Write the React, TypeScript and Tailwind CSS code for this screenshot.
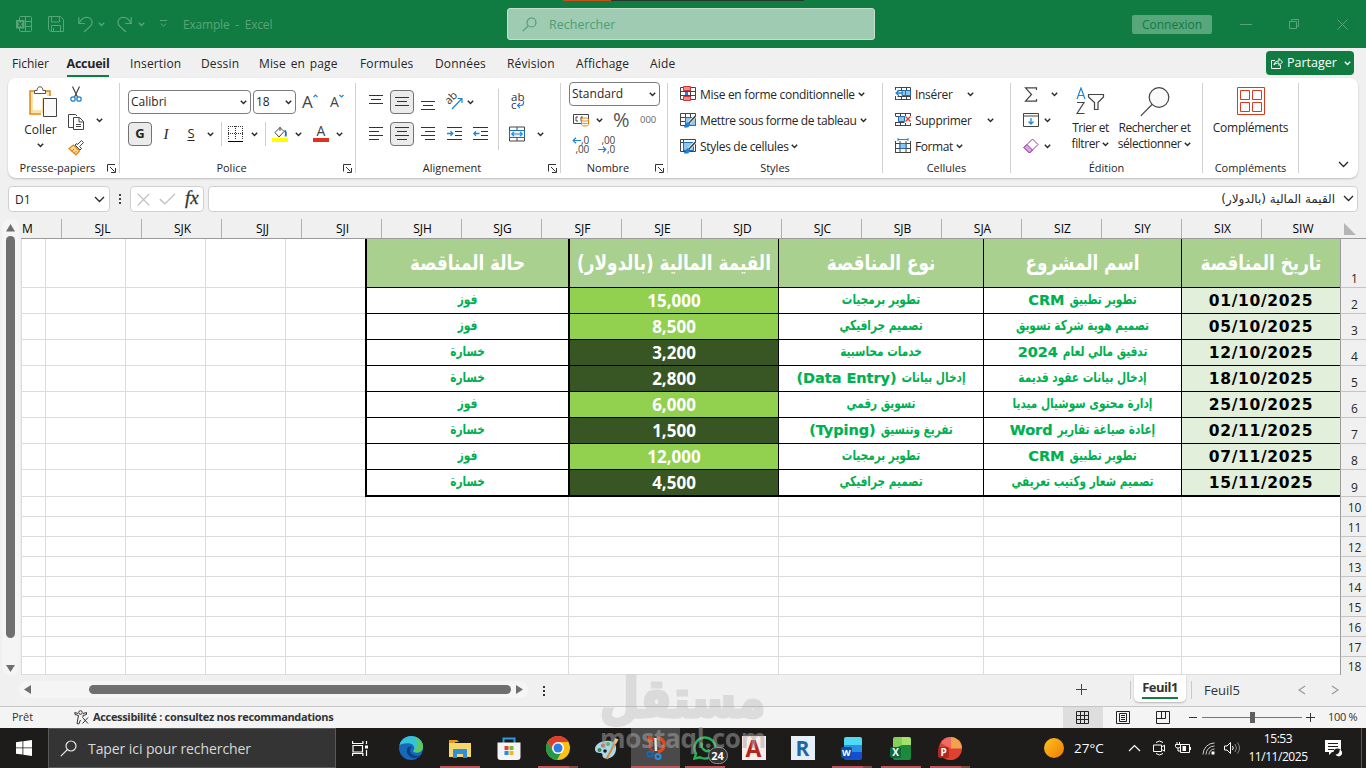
import type { ReactNode } from 'react'
import clsx from 'clsx'

const MENU = ['Insertion', 'Dessin', 'Mise en page', 'Formules', 'Données', 'Révision', 'Affichage', 'Aide']
const MENU_W = ['w-[71px]', 'w-[58px]', 'w-[101px]', 'w-[75px]', 'w-[72px]', 'w-[69px]', 'w-[74px]', 'w-[40px]']
const COLS = ['SJL', 'SJK', 'SJJ', 'SJI', 'SJH', 'SJG', 'SJF', 'SJE', 'SJD', 'SJC', 'SJB', 'SJA', 'SIZ', 'SIY', 'SIX', 'SIW']

type Tender = { date: string; project: string; kind: string; value: string; won: boolean }

const TENDERS: Tender[] = [
  { date: '01/10/2025', project: 'تطوير تطبيق CRM', kind: 'تطوير برمجيات', value: '15,000', won: true },
  { date: '05/10/2025', project: 'تصميم هوية شركة تسويق', kind: 'تصميم جرافيكي', value: '8,500', won: true },
  { date: '12/10/2025', project: 'تدقيق مالي لعام 2024', kind: 'خدمات محاسبية', value: '3,200', won: false },
  { date: '18/10/2025', project: 'إدخال بيانات عقود قديمة', kind: 'إدخال بيانات (Data Entry)', value: '2,800', won: false },
  { date: '25/10/2025', project: 'إدارة محتوى سوشيال ميديا', kind: 'تسويق رقمي', value: '6,000', won: true },
  { date: '02/11/2025', project: 'إعادة صياغة تقارير Word', kind: 'تفريغ وتنسيق (Typing)', value: '1,500', won: false },
  { date: '07/11/2025', project: 'تطوير تطبيق CRM', kind: 'تطوير برمجيات', value: '12,000', won: true },
  { date: '15/11/2025', project: 'تصميم شعار وكتيب تعريفي', kind: 'تصميم جرافيكي', value: '4,500', won: false },
]

function Chev({ className = '' }: { className?: string }) {
  return (
    <svg width="7" height="5" viewBox="0 0 7 5" className={clsx('shrink-0', className)} fill="none" stroke="currentColor" strokeWidth="1.4">
      <path d="M.8 .8 3.5 3.5 6.2 .8" />
    </svg>
  )
}

function BigChev({ className = '' }: { className?: string }) {
  return (
    <svg width="11" height="7" viewBox="0 0 11 7" className={clsx('shrink-0', className)} fill="none" stroke="currentColor" strokeWidth="1.3">
      <path d="M1 1 5.5 5.5 10 1" />
    </svg>
  )
}

function Cell({ w, children }: { w: string; children?: ReactNode }) {
  return <div className={clsx('flex h-full shrink-0 items-center justify-center', w)}>{children}</div>
}

function Launcher() {
  return (
    <svg width="9" height="9" viewBox="0 0 9 9" fill="none" stroke="#333" strokeWidth="1">
      <path d="M.5 7.5V.5H8M3 3l4.5 4.5M8.5 4v4.5H4" />
    </svg>
  )
}

function Group({ w, label, launcher, children }: { w: string; label: string; launcher?: boolean; children: ReactNode }) {
  return (
    <div className={clsx('flex h-full shrink-0', w)}>
      <div className="flex min-w-0 flex-1 flex-col">
        <div className="h-[82px]">{children}</div>
        <div className="flex h-4 items-center">
          <div className="flex-1 text-center text-[11px] leading-4 whitespace-nowrap text-[#262626]">{label}</div>
          {launcher && <div className="w-3"><Launcher /></div>}
        </div>
      </div>
      <div className="mt-[5px] h-[90px] w-px bg-[#d0d0d0]" />
    </div>
  )
}

/* rows of [start, end] for the alignment icons */
function Lines({ rows, y = 0 }: { rows: [number, number][]; y?: number }) {
  return (
    <svg width="14" height="16" viewBox="0 0 14 16" stroke="#333" strokeWidth="1" shapeRendering="crispEdges">
      {rows.map(([a, b], i) => (
        <path key={i} d={`M${a} ${y + i * 4 + 0.5}H${b}`} />
      ))}
    </svg>
  )
}

function Pressed({ children }: { children: ReactNode }) {
  return <div className="flex size-6 shrink-0 items-center justify-center rounded-[4px] border border-[#737373] bg-[#ebebeb]">{children}</div>
}

function Indent({ left }: { left?: boolean }) {
  return (
    <svg width="15" height="14" viewBox="0 0 15 14" fill="none" stroke="#333" shapeRendering="crispEdges">
      <path d="M0 .5H15M8 4.5H15M8 8.5H15M0 12.5H15" />
      <path shapeRendering="auto" stroke="#1e86d6" strokeWidth="1.3" d={left ? 'M6.5 6.5H1M3 4.2 .8 6.5 3 8.8' : 'M0 6.5H5.5M3.5 4.2 5.8 6.5 3.5 8.8'} />
    </svg>
  )
}

function GridIcon({ kind }: { kind: 'cond' | 'table' | 'cell' | 'insert' | 'delete' | 'format' }) {
  return (
    <svg width="16" height="16" viewBox="0 0 16 16" fill="none" stroke="#444" className="shrink-0">
      {kind === 'cond' && (
        <>
          <path d="M.5 1.5h15v12H.5zM.5 5.5h15M.5 9.5h15M5.5 1v13M10.5 1v13" />
          <path d="M3.5.5h7v4h-7zM3.5 10.5h7v4h-7z" fill="#f58b8b" stroke="#d13438" />
          <path d="M5 6h3v3H5z" fill="#1e86d6" stroke="none" />
        </>
      )}
      {kind === 'table' && (
        <>
          <path d="M.5 1.5h15v12H.5zM.5 5.5h15M.5 9.5h15M5.5 1v13M10.5 1v13" fill="#fff" />
          <path d="M5.5 5.5h10v8h-10z" fill="#8ec6ee" stroke="#1e6fb8" />
          <path d="M15.5 4 9 11" stroke="#fff" strokeWidth="3" />
          <path d="M15.5 4 9 11" strokeWidth="1.6" />
          <path d="M8.5 10.5c-3 0-2 3-4.5 4.5 3 .8 6 0 6-3z" fill="#1e86d6" stroke="#1e6fb8" strokeWidth=".6" />
        </>
      )}
      {kind === 'cell' && (
        <>
          <path d="M.5 1.5h15v12H.5z" fill="#fff" />
          <path d="M3.5 1v13M.5 4.5h15" />
          <path d="M3.5 4.5h10v8h-10z" fill="#8ec6ee" stroke="#1e6fb8" />
          <path d="M15.5 4 9 11" stroke="#fff" strokeWidth="3" />
          <path d="M15.5 4 9 11" strokeWidth="1.6" />
          <path d="M8.5 10.5c-3 0-2 3-4.5 4.5 3 .8 6 0 6-3z" fill="#1e86d6" stroke="#1e6fb8" strokeWidth=".6" />
        </>
      )}
      {kind === 'insert' && (
        <>
          <path d="M2.5 1.5h13v12h-13M2.5 4.5h13M2.5 10.5h13M6.5 1v3M11.5 1v3M6.5 10v4M11.5 10v4M.5 1.5h2M.5 13.5h2M.5 10v4M.5 1v3" />
          <path d="M7 4.5h8.5v5H7z" fill="#8ec6ee" stroke="#1e6fb8" />
          <path d="M10.5 5v5" stroke="#1e6fb8" />
          <path d="M8 7H1.5M4 4.2 1.2 7 4 9.8" stroke="#1e86d6" strokeWidth="1.4" />
        </>
      )}
      {kind === 'delete' && (
        <>
          <path d="M.5 1.5h15M.5 4.5h9M.5 10.5h9M.5 13.5h15M.5 1v3M5.5 1v3M10.5 1v3M15.5 1v3M.5 10v4M5.5 10v4M10.5 11v3M15.5 11v3" />
          <path d="M3.5 4.5h6v5h-6z" fill="#8ec6ee" stroke="#1e6fb8" />
          <path d="m10.5 4.5 5 5M15.5 4.5l-5 5" stroke="#e03c31" strokeWidth="1.4" />
        </>
      )}
      {kind === 'format' && (
        <>
          <path d="M.5 3v12M.5 5.5h15M15.5 3v12M.5 10.5h15M.5 14.5h15M5 3v12M11 3v12" />
          <path d="M5 5.5h6v5H5z" fill="#8ec6ee" stroke="#1e6fb8" />
          <path d="M3 1.5h10M3 0v3M13 0v3" stroke="#1e86d6" />
        </>
      )}
    </svg>
  )
}

function TitleBar() {
  return (
    <div className="flex h-12 shrink-0 items-center bg-[#107c41] text-[#57a57b]">
      <div className="flex w-[507px] items-center pl-4">
        <svg width="16" height="16" viewBox="0 0 16 16" fill="none" stroke="currentColor">
          <path d="M3.5 4V1.5q0-1 1-1h10q1 0 1 1v13q0 1-1 1h-10q-1 0-1-1V12M9.5.5v15M9 5.5h6M9 10.5h6" />
          <path d="M0 4h8.5v8.5H0z" fill="currentColor" stroke="none" />
          <path d="m2.5 6 3.5 4.5M6 6l-3.5 4.5" stroke="#107c41" strokeWidth="1.3" />
        </svg>
        <svg width="16" height="16" viewBox="0 0 16 16" fill="none" stroke="currentColor" className="ml-4">
          <path d="M.5.5h12l3 3v12H2.5l-2-2zM3.5 1v5h8V1M3.5 15.5v-6h9v6M5.5 12v3.5" />
        </svg>
        <svg width="15" height="17" viewBox="0 0 15 17" fill="none" stroke="currentColor" strokeWidth="1.2" className="ml-[14px]">
          <path d="M.8 1v6.5h6M1 7.5C3 3 6.5.8 10 1.5c4.5 1 5 6 2.5 8.5L6 16" />
        </svg>
        <Chev className="ml-[5px]" />
        <svg width="15" height="17" viewBox="0 0 15 17" fill="none" stroke="currentColor" strokeWidth="1.2" className="ml-3">
          <path d="M14.2 1v6.5h-6M14 7.5C12 3 8.5.8 5 1.5c-4.5 1-5 6-2.5 8.5L9 16" />
        </svg>
        <Chev className="ml-[6px]" />
        <svg width="7" height="8" viewBox="0 0 7 8" fill="none" stroke="currentColor" className="ml-[15px]">
          <path d="M0 .5h7M.8 3.5l2.7 2.7L6.2 3.5" />
        </svg>
        <span className="ml-4 pt-[2px] text-[12px] tracking-[-0.2px] whitespace-pre">Example  -  Excel</span>
      </div>
      <div className="flex h-8 w-[368px] items-center rounded-[3px] border border-[#c3dfcf] bg-[#9fcbb3] pl-[14px] text-[#4c9f72]">
        <svg width="15" height="15" viewBox="0 0 15 15" fill="none" stroke="currentColor" strokeWidth="1.2">
          <circle cx="9.5" cy="5.5" r="4.5" />
          <path d="M6.2 8.8.8 14.2" />
        </svg>
        <span className="ml-3 pt-[2px] text-[12.5px]">Rechercher</span>
      </div>
      <div className="ml-[257px] flex h-[19px] w-20 items-center justify-center rounded-[2px] bg-[#58a67c] pt-[2px] text-[12px] text-[#107c41]">Connexion</div>
      <div className="ml-7 h-px w-3 bg-current" />
      <svg width="10" height="10" viewBox="0 0 10 10" fill="none" stroke="currentColor" className="ml-[37px]">
        <path d="M.5 2.5h7v7h-7zM2.5 2.5v-2h7v7h-2" />
      </svg>
      <svg width="11" height="11" viewBox="0 0 11 11" stroke="currentColor" className="ml-[38px]">
        <path d="m.5.5 10 10M10.5.5l-10 10" />
      </svg>
    </div>
  )
}

function MenuBar() {
  return (
    <div className="flex h-[30px] shrink-0 items-center text-[12px] text-[#262626]">
      <div className="mt-[2px] w-[55px] pl-3">Fichier</div>
      <div className="mt-[3px] flex w-[66px] justify-center">
        <div className="border-b-2 border-[#107c41] text-center text-[12.5px] leading-[22px] font-bold tracking-[-0.25px]">Accueil</div>
      </div>
      <div className="mt-[2px] ml-[-4px] flex pl-[13px] tracking-[0.15px] [word-spacing:1.5px]">
        {MENU.map((m, i) => (
          <div key={m} className={clsx('whitespace-nowrap', MENU_W[i])}>{m}</div>
        ))}
      </div>
      <div className="flex-1" />
      <div className="mr-3 flex h-6 w-[88px] items-center rounded-[4px] bg-[#107c41] pl-[5px] text-[12.5px] text-white">
        <svg width="12" height="12" viewBox="0 0 12 12" fill="none" stroke="currentColor" className="mr-1">
          <path d="M4 3.5H.5v8h9V8M3 8c.5-3 2-4 5-4V1.5L11.5 5 8 8.5V6C5.5 6 4 6.5 3 8z" />
        </svg>
        <span className="pt-px">Partager</span>
        <Chev className="ml-[7px]" />
      </div>
    </div>
  )
}

function Ribbon() {
  return (
    <div className="mx-2 flex h-[100px] shrink-0 rounded-lg bg-white text-[12px] text-[#262626] shadow-[0_1px_2px_rgba(0,0,0,0.22)]">
      <Group w="w-[112px]" label="Presse-papiers" launcher>
        <div className="flex pt-2">
          <div className="flex w-[60px] flex-col items-center pl-[5px]">
            <svg width="30" height="32" viewBox="0 0 30 32" fill="none" className="ml-[5px]">
              <path d="M2 5h20v5h-7v17H2z" fill="#fbe2a8" />
              <path d="M5 8h14v3h-5v13H5z" fill="#fff" />
              <path d="M6 5H2v23h11M17 5h5v5" stroke="#e8820e" strokeWidth="1.5" />
              <path d="M6.5 7.5v-3H9c0-5 6-5 6 0h2.5v3z" fill="#fff" stroke="#555" />
              <path d="M15.5 12.5h13v18h-13z" fill="#fafafa" stroke="#444" />
            </svg>
            <span className="mt-[3px] leading-[18px]">Coller</span>
            <Chev className="mt-1" />
          </div>
          <div className="flex h-[70px] w-4 flex-col items-center justify-between">
            <svg width="12" height="17" viewBox="0 0 12 17" fill="none" stroke="#444">
              <path d="m2.5.5 5.2 11M9.5.5 4.3 11.5" strokeWidth="1.2" />
              <circle cx="3" cy="13" r="2.2" stroke="#1e86d6" strokeWidth="1.3" />
              <circle cx="9" cy="13" r="2.2" stroke="#1e86d6" strokeWidth="1.3" />
            </svg>
            <svg width="16" height="16" viewBox="0 0 16 16" fill="none" stroke="#444">
              <path d="M5 13.5H.5V.5h7L9 2" />
              <path d="M5.5 3.5h6l4 4v8h-10zM11 3.5v4.5h4.5M8 10.5h5M8 12.5h5" fill="#fff" />
            </svg>
            <svg width="16" height="16" viewBox="0 0 16 16" fill="none">
              <path d="M1 8.5 5.5 5l6 6L8 15z" fill="#fbd9a0" stroke="#e8820e" strokeWidth="1.2" />
              <path d="M3.5 11.5 6 9M6 13.5 8.5 11" stroke="#e8820e" />
              <path d="m7 5 5 5 1.5-1.5-2-2 4-4-2-2-4 4L9 3.5z" fill="#fff" stroke="#444" />
            </svg>
          </div>
          <Chev className="mt-8 ml-3" />
        </div>
      </Group>

      <Group w="w-[236px]" label="Police" launcher>
        <div className="flex h-full flex-col gap-2 pt-3 pl-2">
          <div className="flex h-6 items-center">
            <div className="flex h-6 w-[123px] items-center justify-between rounded-[4px] border border-[#7d7d7d] pr-[3px] pl-[2px]">
              Calibri <Chev />
            </div>
            <div className="ml-[2px] flex h-6 w-[43px] items-center justify-between rounded-[4px] border border-[#7d7d7d] pr-[3px] pl-[2px]">
              18 <Chev />
            </div>
            <div className="ml-[6px] flex w-[17px] text-[17px] leading-6 text-[#444]">
              A
              <svg width="5" height="4" viewBox="0 0 5 4" fill="none" stroke="#1e86d6" strokeWidth="1.2" className="mt-1 shrink-0"><path d="M.5 3 2.5 1l2 2" /></svg>
            </div>
            <div className="ml-[11px] flex w-[15px] text-[14px] leading-6 text-[#444]">
              A
              <svg width="5" height="4" viewBox="0 0 5 4" fill="none" stroke="#1e86d6" strokeWidth="1.2" className="mt-1 shrink-0"><path d="m.5 1 2 2 2-2" /></svg>
            </div>
          </div>
          <div className="flex h-6 items-center">
            <Pressed><span className="text-[13px] font-bold">G</span></Pressed>
            <Cell w="w-7"><span className="font-['Liberation_Serif'] text-[15px] italic">I</span></Cell>
            <Cell w="w-[22px]"><span className="text-[13px] underline underline-offset-2">S</span></Cell>
            <Cell w="w-4"><Chev /></Cell>
            <Cell w="w-[6px]"><div className="h-6 w-px bg-[#d0d0d0]" /></Cell>
            <Cell w="w-[23px]">
              <svg width="15" height="16" viewBox="0 0 15 16" fill="none" stroke="#333" shapeRendering="crispEdges">
                <path d="M0 .5h15M0 7.5h15M.5 0v14M7.5 0v14M14.5 0v14" strokeDasharray="1 1" />
                <path d="M0 15h15" strokeWidth="1" stroke="#000" />
              </svg>
            </Cell>
            <Cell w="w-[15px]"><Chev /></Cell>
            <Cell w="w-[6px]"><div className="h-6 w-px bg-[#d0d0d0]" /></Cell>
            <Cell w="w-[23px]">
              <svg width="16" height="16" viewBox="0 0 16 16" fill="none">
                <path d="M0 12h16v4H0z" fill="#ff0" />
                <path d="m3 6.5 5-5 4 4-5 5.5z" fill="#fff" stroke="#444" />
                <path d="M8 1v4" stroke="#444" />
                <path d="M12.5 4.5c1.5 1 1.8 3 1 6" stroke="#1e6fb8" strokeWidth="1.8" />
              </svg>
            </Cell>
            <Cell w="w-[15px]"><Chev /></Cell>
            <Cell w="w-[30px]">
              <div className="flex h-4 w-4 flex-col items-center border-b-4 border-[#e03020] text-[14px] leading-[10px] text-[#444]">A</div>
            </Cell>
            <Cell w="w-[7px]"><Chev /></Cell>
          </div>
        </div>
      </Group>

      <Group w="w-[205px]" label="Alignement" launcher>
        <div className="flex pt-[11px] pl-[6px]">
          <div className="flex w-[137px] flex-col gap-2 border-r border-[#d0d0d0] pt-px pb-1">
            <div className="flex h-6 items-center">
              <Cell w="w-7"><Lines rows={[[0, 14], [2, 12], [0, 14]]} y={1} /></Cell>
              <Pressed><Lines rows={[[0, 14], [2, 12], [0, 14]]} y={3} /></Pressed>
              <Cell w="w-7"><Lines rows={[[0, 14], [2, 12], [0, 14]]} y={7} /></Cell>
              <Cell w="w-[25px]">
                <svg width="17" height="18" viewBox="0 0 17 18" fill="none" className="overflow-visible">
                  <text x="3" y="12" transform="rotate(-45 3 12)" fontSize="11" fill="#333">ab</text>
                  <path d="M6 16 16 5.5M11.5 5.5H16V10" stroke="#1e86d6" strokeWidth="1.2" />
                </svg>
              </Cell>
              <Cell w="w-[7px]"><Chev /></Cell>
            </div>
            <div className="flex h-6 items-center">
              <Cell w="w-7"><Lines rows={[[0, 14], [0, 10], [0, 14], [0, 10]]} y={1} /></Cell>
              <Pressed><Lines rows={[[0, 14], [2, 12], [0, 14], [2, 12]]} y={1} /></Pressed>
              <Cell w="w-7"><Lines rows={[[0, 14], [4, 14], [0, 14], [4, 14]]} y={1} /></Cell>
              <Cell w="w-6"><Indent /></Cell>
              <Cell w="w-7"><Indent left /></Cell>
            </div>
          </div>
          <div className="flex flex-col gap-2 pt-px pl-[10px]">
            <div className="flex h-6 items-center">
              <svg width="16" height="18" viewBox="0 0 16 18" fill="none" className="overflow-visible">
                <text x="2" y="8" fontSize="11.5" fill="#333">ab</text>
                <text x="2" y="16" fontSize="11.5" fill="#333">c</text>
                <path d="M14.5 8v2q0 2.5-3 2.5H8.5M11 10l-2.5 2.5L11 15" stroke="#1e86d6" strokeWidth="1.2" />
              </svg>
            </div>
            <div className="flex h-6 items-center">
              <svg width="16" height="16" viewBox="0 0 16 16" fill="none" stroke="#444">
                <path d="M.5 1h15v14H.5zM8 1v3M8 12v3" />
                <path d="M.5 4.5h15v7H.5z" fill="#e8f3fc" stroke="#1e6fb8" />
                <path d="M2.5 8h11M5 5.8 2.8 8 5 10.2M11 5.8 13.2 8 11 10.2" stroke="#1e86d6" strokeWidth="1.2" />
              </svg>
              <Chev className="ml-3" />
            </div>
          </div>
        </div>
      </Group>

      <Group w="w-[107px]" label="Nombre" launcher>
        <div className="flex flex-col pt-1 pl-2">
          <div className="flex h-6 w-[91px] items-center justify-between rounded-[4px] border border-[#7d7d7d] pr-[3px] pl-[2px]">
            Standard <Chev />
          </div>
          <div className="mt-[2px] flex h-6 items-center pl-1">
            <svg width="17" height="14" viewBox="0 0 17 14" fill="none" stroke="#444">
              <path d="M.5 1.5h15v9H.5zM5 4H3v4h2M8 8V4h2" />
              <path d="M8.5 6.5c0-2 7-2 7 0v5c0 2-7 2-7 0z" fill="#fff" stroke="#e8820e" />
              <path d="M8.5 7c0 1.5 7 1.5 7 0M8.5 9.5c0 1.5 7 1.5 7 0" stroke="#e8820e" />
            </svg>
            <Chev className="ml-[6px]" />
            <span className="ml-[10px] w-[18px] text-[20px] leading-6 text-[#555]">%</span>
            <span className="ml-[9px] text-[9.5px] text-[#666]">000</span>
          </div>
          <div className="mt-[4px] flex h-5 gap-[9px] pl-[3px] text-[10px] leading-[9px] tracking-[-0.2px] text-[#444]">
            <div className="flex w-[17px] flex-col items-end">
              <div className="flex items-center"><svg width="9" height="7" viewBox="0 0 9 7" fill="none" stroke="#1e86d6" strokeWidth="1.2"><path d="M9 3.5H1M4 .8 1.2 3.5 4 6.2" /></svg>,0</div>
              <div>,00</div>
            </div>
            <div className="flex w-[17px] flex-col items-end">
              <div>,00</div>
              <div className="flex items-center"><svg width="9" height="7" viewBox="0 0 9 7" fill="none" stroke="#1e86d6" strokeWidth="1.2"><path d="M0 3.5h8M5 .8l2.8 2.7L5 6.2" /></svg>,0</div>
            </div>
          </div>
        </div>
      </Group>

      <Group w="w-[215px]" label="Styles">
        <div className="flex flex-col pt-[3px] pl-3 tracking-[-0.3px]">
          <div className="flex h-[26px] items-center gap-1"><GridIcon kind="cond" /><span className="pt-px">Mise en forme conditionnelle</span><Chev className="-ml-px" /></div>
          <div className="flex h-[26px] items-center gap-1"><GridIcon kind="table" /><span className="pt-px tracking-[-0.35px]">Mettre sous forme de tableau</span><Chev className="-ml-px" /></div>
          <div className="flex h-[26px] items-center gap-1"><GridIcon kind="cell" /><span className="pt-px">Styles de cellules</span><Chev className="-ml-[2px]" /></div>
        </div>
      </Group>

      <Group w="w-[128px]" label="Cellules">
        <div className="flex flex-col pt-[3px] pl-3 tracking-[-0.3px]">
          <div className="flex h-[26px] items-center gap-1"><GridIcon kind="insert" /><span className="w-12 pt-px">Insérer</span><Chev /></div>
          <div className="flex h-[26px] items-center gap-1"><GridIcon kind="delete" /><span className="w-[68px] pt-px">Supprimer</span><Chev /></div>
          <div className="flex h-[26px] items-center gap-1"><GridIcon kind="format" /><span className="pt-px tracking-[-0.4px]">Format</span><Chev className="-ml-px" /></div>
        </div>
      </Group>

      <Group w="w-[192px]" label="Édition">
        <div className="flex">
          <div className="flex w-10 shrink-0 flex-col pt-[3px] pl-3">
            <div className="flex h-[26px] items-center">
              <svg width="16" height="15" viewBox="0 0 16 15" fill="none" stroke="#444" strokeWidth="1.2" className="shrink-0"><path d="M13.5 3V.8H2.5L8.5 7.5l-6 6.7h11V12" /></svg>
              <Chev className="ml-3" />
            </div>
            <div className="flex h-[26px] items-center">
              <svg width="16" height="14" viewBox="0 0 16 14" fill="none" stroke="#444" className="shrink-0">
                <path d="M.5.5h15v13H.5zM.5 3h15" />
                <path d="M8 5v6M5.5 8.5 8 11l2.5-2.5" stroke="#1e86d6" strokeWidth="1.3" />
              </svg>
              <Chev className="ml-[5px]" />
            </div>
            <div className="flex h-[26px] items-center">
              <svg width="16" height="16" viewBox="0 0 16 16" fill="none" stroke="#8e3a9d" className="shrink-0">
                <path d="M1 9.5 9.5 1 15 6.5 6.5 15z" fill="#fff" />
                <path d="M1 9.5 4 6.5 9.5 12l-3 3z" fill="#d9a6e0" />
              </svg>
              <Chev className="ml-[5px]" />
            </div>
          </div>
          <div className="flex w-[79px] flex-col items-center pt-[9px] tracking-[-0.45px]">
            <svg width="29" height="29" viewBox="0 0 29 29" fill="none" stroke="#444">
              <path d="m1 12 4-11 4 11M2.5 8.5h5" stroke="#1e86d6" strokeWidth="1.2" />
              <path d="M1 15.5h7L1 26.5h7.5" strokeWidth="1.2" />
              <path d="M12.5 7.5h15v2.5L22 15.5V22.5h-3.5V15.5L12.5 10z" fill="#fafafa" strokeWidth="1.2" />
            </svg>
            <span className="mt-[4px] leading-4">Trier et</span>
            <span className="flex items-center gap-[3px] leading-4">filtrer <Chev /></span>
          </div>
          <div className="flex w-[49px] flex-col items-center pt-[9px] tracking-[-0.45px]">
            <svg width="30" height="30" viewBox="0 0 30 30" fill="none" stroke="#444" strokeWidth="1.2">
              <circle cx="19" cy="10.5" r="9.8" fill="#fafafa" />
              <path d="M12 17.5.8 28.8" />
            </svg>
            <span className="mt-[3px] leading-4 whitespace-nowrap">Rechercher et</span>
            <span className="flex items-center gap-[3px] leading-4">sélectionner <Chev /></span>
          </div>
        </div>
      </Group>

      <Group w="w-[96px]" label="Compléments">
        <div className="flex flex-col items-center pt-[9px]">
          <svg width="28" height="28" viewBox="0 0 28 28" fill="none" stroke="#d83b21">
            <path d="M.5.5h27v27H.5zM3.5 3.5h9v9h-9zM15.5 3.5h9v9h-9zM3.5 15.5h9v9h-9zM15.5 15.5h9v9h-9z" />
          </svg>
          <span className="mt-[5px] leading-4 tracking-[-0.25px]">Compléments</span>
        </div>
      </Group>
      <div className="flex flex-1 items-end justify-end pr-[9px] pb-[10px]"><BigChev /></div>
    </div>
  )
}

function FormulaBar() {
  return (
    <div className="flex h-[41px] shrink-0 px-2 pt-2 text-[12px] text-[#262626]">
      <div className="flex h-[26px] w-[102px] items-center justify-between rounded-[4px] border border-[#d0d0d0] bg-white pr-1 pl-[6px]">
        <span className="pt-px">D1</span> <BigChev />
      </div>
      <div className="flex h-[26px] w-5 flex-col items-center justify-center gap-[2px]">
        {[0, 1, 2].map((i) => <div key={i} className="size-[2px] bg-[#444]" />)}
      </div>
      <div className="flex h-[26px] w-[74px] items-center gap-[9px] rounded-[4px] border border-[#d0d0d0] bg-white pl-[6px]">
        <svg width="13" height="13" viewBox="0 0 13 13" stroke="#bbb" strokeWidth="1.2"><path d="m.8.8 11.5 11.5M12.2.8.8 12.3" /></svg>
        <svg width="17" height="12" viewBox="0 0 17 12" fill="none" stroke="#bbb" strokeWidth="1.2"><path d="m.8 6 5 5L16 .8" /></svg>
        <span className="-mt-[2px] font-['Liberation_Serif'] text-[19px] leading-5 text-[#333] italic [-webkit-text-stroke:0.3px]">fx</span>
      </div>
      <div className="ml-1 flex h-[26px] flex-1 items-center justify-end rounded-[4px] border border-[#d0d0d0] bg-white pr-[3px] pb-px">
        <span dir="rtl" className="mr-2 font-['DejaVu_Sans'] text-[12px] tracking-normal">القيمة المالية (بالدولار)</span>
        <BigChev />
      </div>
    </div>
  )
}

function Caret({ d, className = '' }: { d: string; className?: string }) {
  return <svg width="9" height="9" viewBox="0 0 9 9" fill="#6f6f6f" className={clsx('shrink-0', className)}><path d={d} /></svg>
}

function EmptyCols({ h }: { h: string }) {
  return (
    <>
      <div className={clsx('w-6 shrink-0 border-r border-b border-[#dcdcdc]', h)} />
      {[0, 1, 2].map((i) => <div key={i} className={clsx('w-20 shrink-0 border-r border-b border-[#dcdcdc]', h)} />)}
      <div className={clsx('w-[79px] shrink-0 border-b border-[#dcdcdc]', h)} />
    </>
  )
}

/* latin runs are set wider than the arabic around them */
function Mixed({ text }: { text: string }) {
  const at = text.search(/[(A-Z0-9]/)
  const arabic = at < 0 ? text : text.slice(0, at).trim()
  const latin = at < 0 ? '' : text.slice(at)
  return (
    <div dir="rtl" className="flex items-center gap-[5px]">
      <span className="scale-y-[1.18]">{arabic}</span>
      {latin && <span dir="ltr" className="font-['DejaVu_Sans'] text-[14.5px] leading-5 tracking-[-0.05px] font-stretch-normal [-webkit-text-stroke:0.2px]">{latin}</span>}
    </div>
  )
}

const cell = 'flex shrink-0 items-center justify-center border-black whitespace-nowrap'

function HeadCell({ text, className }: { text: string; className: string }) {
  return (
    <div dir="rtl" className={clsx(cell, 'border-b bg-[#a9d08e]', className)}>
      <span className="scale-y-[1.12]">{text}</span>
    </div>
  )
}

function Sheet() {
  return (
    <div className="flex h-[456px] shrink-0">
      <div className="flex w-[21px] shrink-0 flex-col items-center">
        <div className="flex h-full w-[17px] flex-col items-center rounded-lg bg-[#f5f5f5] pt-[5px] pb-[2px]">
          <Caret d="M4.5 0 9 7.5H0z" />
          <div className="mt-[3px] h-[402px] w-[9px] rounded-full bg-[#6f6f6f]" />
          <div className="flex-1" />
          <Caret d="M0 1h9L4.5 8z" />
        </div>
      </div>
      <div className="flex w-[1319px] shrink-0 flex-col">
        <div className="flex h-5 shrink-0 overflow-hidden border-b border-[#9b9b9b] text-[12px] leading-[19px] text-black">
          <div className="w-[41px] shrink-0 border-r border-[#b0b0b0] pl-[1px]">M</div>
          {COLS.map((c, i) => (
            <div key={c} className={clsx('w-20 shrink-0 pl-[2px] text-center', i < 15 && 'border-r border-[#b0b0b0]')}>{c}</div>
          ))}
        </div>
        <div className="flex-1 overflow-hidden border-b border-l border-[#dcdcdc] bg-white">
          <div className="flex h-[49px] font-['DejaVu_Sans_Condensed','DejaVu_Sans'] text-[18.7px] font-bold text-white font-stretch-semi-condensed">
            <EmptyCols h="h-[49px]" />
            <HeadCell text="حالة المناقصة" className="w-[203px] border-l-2" />
            <HeadCell text="القيمة المالية (بالدولار)" className="w-[211px] border-r border-l-2" />
            <HeadCell text="نوع المناقصة" className="w-[205px] border-r" />
            <HeadCell text="اسم المشروع" className="w-[198px] border-r" />
            <HeadCell text="تاريخ المناقصة" className="w-[158px]" />
          </div>
          {TENDERS.map((t, i) => {
            const last = i === TENDERS.length - 1
            const h = last ? 'h-[27px]' : 'h-[26px]'
            const row = clsx(cell, h, last ? 'border-b-2' : 'border-b')
            return (
              <div key={t.date} className="flex font-['DejaVu_Sans_Condensed','DejaVu_Sans'] text-[11.7px] font-bold text-[#00b050] font-stretch-semi-condensed">
                <EmptyCols h={h} />
                <div className={clsx(row, 'w-[203px] border-l-2 pb-[2px]')}><Mixed text={t.won ? 'فوز' : 'خسارة'} /></div>
                <div className={clsx(row, "w-[211px] border-r border-l-2 font-['Open_Sans'] text-[17px] text-white font-stretch-normal", t.won ? 'bg-[#92d050]' : 'bg-[#375623]')}>{t.value}</div>
                <div className={clsx(row, 'w-[205px] border-r pb-[2px]')}><Mixed text={t.kind} /></div>
                <div className={clsx(row, 'w-[198px] border-r pb-[2px]')}><Mixed text={t.project} /></div>
                <div className={clsx(row, "w-[158px] bg-[#e2efda] pt-[2px] font-['DejaVu_Sans'] text-[15.5px] tracking-[0.7px] text-black font-stretch-normal")}>{t.date}</div>
              </div>
            )
          })}
          {[10, 11, 12, 13, 14, 15, 16, 17, 18].map((n) => (
            <div key={n} className="flex h-5">
              <EmptyCols h="h-5" />
              <div className="w-[203px] shrink-0 border-b border-l border-[#dcdcdc]" />
              <div className="w-[211px] shrink-0 border-r border-b border-l border-[#dcdcdc]" />
              <div className="w-[205px] shrink-0 border-r border-b border-[#dcdcdc]" />
              <div className="w-[198px] shrink-0 border-r border-b border-[#dcdcdc]" />
              <div className="w-[158px] shrink-0 border-b border-[#dcdcdc]" />
            </div>
          ))}
        </div>
      </div>
      <div className="flex w-[26px] shrink-0 flex-col overflow-hidden text-[12px]">
        <div className="flex h-5 shrink-0 items-end border-b border-[#9b9b9b] pb-[3px] pl-1">
          <svg width="12" height="12" viewBox="0 0 12 12" fill="#b5b5b5"><path d="M0 0v12h12z" /></svg>
        </div>
        {Array.from({ length: 18 }, (_, i) => i + 1).map((n) => (
          <div
            key={n}
            className={clsx(
              'flex shrink-0 items-end justify-center border-l border-l-[#9b9b9b] pl-[2px] leading-4 text-[#262626]',
              n < 18 && 'border-b border-b-[#c4c4c4]',
              n === 1 ? 'h-[49px]' : n === 9 ? 'h-[27px]' : n < 9 ? 'h-[26px]' : n === 18 ? 'h-[18px]' : 'h-5',
            )}
          >
            {n}
          </div>
        ))}
      </div>
    </div>
  )
}

function SheetTabs() {
  return (
    <div className="flex h-8 shrink-0 border-b border-[#c6c6c6] text-[13px] text-[#333]">
      <div className="mt-[6px] ml-[19px] flex h-[17px] w-[509px] items-center rounded-lg bg-[#f5f5f5] pl-1">
        <Caret d="M8 0v9L1 4.5z" />
        <div className="ml-[57px] h-[9px] w-[422px] rounded-full bg-[#6f6f6f]" />
        <Caret className="ml-1" d="M1 0v9l7-4.5z" />
      </div>
      <div className="mt-[11px] ml-[15px] flex w-[3px] flex-col gap-[2px]">
        {[0, 1, 2].map((i) => <div key={i} className="size-[2px] bg-[#333]" />)}
      </div>
      <div className="flex-1" />
      <svg width="11" height="11" viewBox="0 0 11 11" stroke="#444" className="mt-[9px]"><path d="M0 5.5h11M5.5 0v11" /></svg>
      <div className="mt-[6px] ml-[43px] h-[18px] w-px bg-[#c8c8c8]" />
      <div className="ml-[3px] flex h-[27px] w-[52px] justify-center rounded-b-[5px] bg-white shadow-[0_1px_2px_rgba(0,0,0,0.25)]">
        <div className="h-6 border-b-2 border-[#107c41] text-[13px] leading-6 font-bold tracking-[-0.5px]">Feuil1</div>
      </div>
      <div className="mt-[6px] ml-[5px] h-[18px] w-px bg-[#c8c8c8]" />
      <div className="w-[106px] pl-3 leading-[31px]">Feuil5</div>
      <svg width="8" height="10" viewBox="0 0 8 10" fill="none" stroke="#999" strokeWidth="1.2" className="mt-[10px] mr-[25px]"><path d="M7 1 1 5l6 4" /></svg>
      <svg width="8" height="10" viewBox="0 0 8 10" fill="none" stroke="#999" strokeWidth="1.2" className="mt-[10px] mr-[27px]"><path d="m1 1 6 4-6 4" /></svg>
    </div>
  )
}

function StatusBar() {
  return (
    <div className="flex h-[21px] shrink-0 items-center bg-[#f4f4f4] pl-3 text-[11px] text-[#333]">
      <span className="w-[62px]">Prêt</span>
      <svg width="16" height="15" viewBox="0 0 16 15" fill="none" stroke="#333">
        <circle cx="6.5" cy="2.5" r="1.8" />
        <path d="M4 3.5.8 2.5 1 4.5l3.5 1L3 13.5l1.8.5L6.5 10M9 3.5l3.5-1v2L9 5.5V7M8.5 7.5l5.5 6M14 7.5l-5.5 6" />
      </svg>
      <span className="ml-[3px] font-bold tracking-[-0.33px]">Accessibilité : consultez nos recommandations</span>
      <div className="flex-1" />
      <div className="flex h-full w-10 items-center justify-center bg-[#dedede]">
        <svg width="13" height="13" viewBox="0 0 13 13" fill="none" stroke="#222" className="-ml-px"><path d="M.5.5h12v12H.5zM.5 4.5h12M.5 8.5h12M4.5.5v12M8.5.5v12" /></svg>
      </div>
      <div className="flex h-full w-10 items-center justify-center">
        <svg width="14" height="13" viewBox="0 0 14 13" fill="none" stroke="#222"><path d="M.5.5h13v12H.5zM3.5 2.5h7v8h-7zM5 4.5h4M5 6.5h4M5 8.5h4" /></svg>
      </div>
      <div className="flex h-full w-10 items-center justify-center">
        <svg width="14" height="13" viewBox="0 0 14 13" fill="none" stroke="#222"><path d="M.5.5h13v12H.5zM5.5 0v7.5M9.5 0v7.5M.5 7.5h9" /></svg>
      </div>
      <div className="ml-[6px] h-px w-2 bg-[#333]" />
      <div className="ml-[5px] flex h-full w-[100px] items-center">
        <div className="h-px w-12 bg-[#777]" />
        <div className="h-[11px] w-[5px] bg-[#5f5f5f]" />
        <div className="h-px flex-1 bg-[#777]" />
      </div>
      <svg width="9" height="9" viewBox="0 0 9 9" stroke="#333" className="ml-[4px]"><path d="M0 4.5h9M4.5 0v9" /></svg>
      <span className="ml-[13px] w-[38px] tracking-[-0.3px] whitespace-nowrap">100 %</span>
    </div>
  )
}

function TaskApp({ on, active, multi, children }: { on?: boolean; active?: boolean; multi?: boolean; children: ReactNode }) {
  return (
    <div className={clsx('flex h-10 w-[49px] shrink-0 flex-col items-center', active && 'bg-[#4a4a4a]')}>
      <div className="flex h-[38px] items-center pt-[2px]">{children}</div>
      {(on || multi) && (
        <div className={clsx('flex h-[2px]', active ? 'w-full' : 'w-10')}>
          <div className="flex-1 bg-[#c2535b]" />
          {multi && <div className="w-[9px] bg-[#7f4a3d]" />}
        </div>
      )}
    </div>
  )
}

function Taskbar() {
  return (
    <div className="flex h-10 shrink-0 items-center bg-[#1d1c1b] text-white">
      <div className="flex w-12 justify-center">
        <svg width="16" height="16" viewBox="0 0 16 16" fill="#fff"><path d="M0 2.2 6.5 1.3v6.2H0zM7.3 1.2 16 0v7.5H7.3zM0 8.3h6.5v6.2L0 13.7zM7.3 8.3H16V16l-8.7-1.2z" /></svg>
      </div>
      <div className="flex h-10 w-[288px] items-center border border-[#5a5a5a] bg-[#343434] pl-[11px]">
        <svg width="17" height="17" viewBox="0 0 17 17" fill="none" stroke="#e6e6e6" strokeWidth="1.2"><circle cx="11" cy="6" r="5" /><path d="M7.5 9.5.8 16.2" /></svg>
        <span className="ml-[11px] text-[14px] tracking-[-0.08px] text-[#d8d8d8]">Taper ici pour rechercher</span>
      </div>
      <div className="flex w-12 justify-center">
        <svg width="17" height="15" viewBox="0 0 17 15" fill="none" stroke="#fff" strokeWidth="1.2">
          <path d="M1 4.5h9.5v6.5H1zM.6 0v2.5h10.3V0M.6 15v-2.5h10.3V15M14.5 0v3M14.5 9v6" />
          <path d="M13 4.5h3v3h-3z" fill="#fff" stroke="none" />
        </svg>
      </div>
      <div className="w-[2px]" />

      <TaskApp>
        <svg width="24" height="24" viewBox="0 0 24 24">
          <circle cx="12" cy="12" r="12" fill="#1668b8" />
          <path d="M.5 9C2 3.5 6.5 0 12 0c7 0 12 5 12 10.5 0 4-3 6-6.5 6-2.5 0-3.5-1-3-2 1.5-2 1-6-3.5-7C7 6.5 2 8 .5 9z" fill="#36c3d8" />
          <path d="M16 1c5 2 8 5.5 8 9.5 0 4-3 6-6.5 6-2.5 0-3.5-1-3-2C18 14 20 6 16 1z" fill="#5ec95f" />
          <path d="M8 13c-1 4 2 9 8 9 2 0 4-1 5-2.5-3 1-8 0-9.5-3C10.5 14 11 12 13 11c-2-1-4.5 0-5 2z" fill="#0e3f86" />
        </svg>
      </TaskApp>
      <TaskApp on>
        <svg width="22" height="19" viewBox="0 0 22 19">
          <path d="M0 1h8l2 2h-4v15H0z" fill="#e39b18" />
          <path d="M0 4h22v14H0z" fill="#f5d76b" />
          <path d="M4 19v-8q0-1 1-1h12q1 0 1 1v8h-4v-4H8v4z" fill="#2e8fdc" />
        </svg>
      </TaskApp>
      <TaskApp>
        <svg width="24" height="23" viewBox="0 0 24 23" fill="none">
          <path d="M6.5 6V1.5h11V6" stroke="#2a9be0" strokeWidth="2" />
          <path d="M.5 5.5h23V20q0 3-3 3h-17q-3 0-3-3z" fill="#f4f4f4" />
          <path d="M7.5 9h4v4h-4z" fill="#e8402a" /><path d="M12.5 9h4v4h-4z" fill="#7cba33" />
          <path d="M7.5 14h4v4h-4z" fill="#1f8fe0" /><path d="M12.5 14h4v4h-4z" fill="#f5b81c" />
        </svg>
      </TaskApp>
      <TaskApp multi>
        <svg width="24" height="24" viewBox="0 0 24 24">
          <circle cx="12" cy="12" r="12" fill="#fbc116" />
          <path d="M1.6 6A12 12 0 0 1 22.4 6H12L7 15z" fill="#e33b2e" />
          <path d="M1.6 6A12 12 0 0 0 11 24l5-9-9 0z" fill="#229a4a" />
          <circle cx="12" cy="12" r="6" fill="#fff" /><circle cx="12" cy="12" r="4.5" fill="#2f7de1" />
        </svg>
      </TaskApp>
      <TaskApp>
        <svg width="24" height="23" viewBox="0 0 24 23">
          <path d="M11 4c7-1 11 3 10 9-1 7-8 10-12 8-3-2 0-4-3-5-4 0-6-1-6-4 0-4 5-8 11-8z" fill="#a9d8ec" />
          <circle cx="4.5" cy="13" r="2" fill="#3f7f4c" /><circle cx="8" cy="8.5" r="2" fill="#e0523c" />
          <circle cx="13" cy="7" r="2" fill="#5bb45c" /><circle cx="10" cy="14" r="1.8" fill="#1d1c1b" />
          <path d="M11.5 22 20 6" stroke="#d98b34" strokeWidth="2" /><path d="m18 6 2-5 3.5 1.5L21 7z" fill="#e8c489" />
        </svg>
      </TaskApp>
      <TaskApp on active>
        <svg width="20" height="24" viewBox="0 0 20 24" fill="none">
          <path d="M11 2c5 0 8 4 7 8-.6 3-3 5-6 6" stroke="#e0481f" strokeWidth="3.5" /><path d="M2 0l7 2-3 4-4 1z" fill="#e0481f" />
          <path d="M4 6c-1 5 0 8 4 10" stroke="#c23a1a" strokeWidth="2.5" />
          <path d="M9.5 2 10 15" stroke="#e6e6e6" strokeWidth="2.5" />
          <circle cx="4" cy="18" r="2.6" stroke="#1767b5" strokeWidth="2" /><circle cx="12" cy="20.5" r="2.6" stroke="#2a8fe0" strokeWidth="2" />
        </svg>
      </TaskApp>
      <TaskApp on>
        <div className="relative">
          <svg width="24" height="24" viewBox="0 0 24 24" fill="none">
            <path d="M1.5 22.5 3 17.5A10.5 10.5 0 1 1 7 21.3z" fill="#1d1c1b" stroke="#25b35a" strokeWidth="2.4" />
            <path d="M7.5 6.5c2-1 2.5 1 2.8 2.5-1.5 1.5 0 3 3.5 5 1-1.5 2-1 3.500 0-.5 3-3.500 3-6 1.500-3-2-5-5.500-3.800-9z" fill="#25b35a" />
          </svg>
          <div className="absolute top-[11px] left-[15px] flex h-[17px] w-5 items-center justify-center rounded-full border border-[#8d8d8d] bg-[#333] text-[11px] leading-4 font-bold">24</div>
        </div>
      </TaskApp>
      <TaskApp>
        <div className="flex size-6 items-center justify-center bg-[#f9ecea] text-[23px] leading-6 font-bold text-[#b5251d]">A</div>
      </TaskApp>
      <TaskApp>
        <div className="flex size-6 items-center justify-center bg-[#e6eef8] text-[21px] leading-6 font-bold text-[#1f66a8]">R</div>
      </TaskApp>
      <TaskApp multi>
        <svg width="22" height="23" viewBox="0 0 22 23">
          <path d="M3 2q0-2 2-2h14q2 0 2 2v6H3z" fill="#50d9f2" /><path d="M3 8h18v7H3z" fill="#2a8fe0" /><path d="M3 15h18v6q0 2-2 2H5q-2 0-2-2z" fill="#134fd0" />
          <rect y="10" width="11" height="11" rx="2" fill="#0c4fa6" /><text x="1" y="19" fontSize="9" fontWeight="700" fill="#fff">W</text>
        </svg>
      </TaskApp>
      <TaskApp on>
        <svg width="22" height="23" viewBox="0 0 22 23">
          <path d="M3 2q0-2 2-2h7v12H3z" fill="#86d05a" /><path d="M12 0h7q2 0 2 2v6h-9z" fill="#a6e06a" /><path d="M3 12 12 8h9v13q0 2-2 2H5q-2 0-2-2z" fill="#1c8a3e" />
          <rect y="10" width="11" height="11" rx="2" fill="#0d6a38" /><text x="2.3" y="19" fontSize="10" fontWeight="700" fill="#fff">X</text>
        </svg>
      </TaskApp>
      <TaskApp multi>
        <svg width="24" height="23" viewBox="0 0 24 23">
          <circle cx="12.5" cy="11.5" r="11.5" fill="#e0402f" /><path d="M12.5 0A11.5 11.5 0 0 1 24 11.5L12.5 11.5z" fill="#f0a24c" /><path d="M12.5 0v11.5L3 6Q6 0 12.5 0z" fill="#f06a6a" />
          <rect y="10" width="11" height="11" rx="2" fill="#b3261a" /><text x="2.5" y="19" fontSize="10" fontWeight="700" fill="#fff">P</text>
        </svg>
      </TaskApp>
      <div className="flex-1" />

      <div className="size-5 rounded-full bg-linear-to-br from-[#fcc21b] to-[#ee7a08]" />
      <span className="ml-[10px] w-[54px] text-[13.5px]">27°C</span>
      <svg width="13" height="8" viewBox="0 0 13 8" fill="none" stroke="#fff" strokeWidth="1.2"><path d="M1 7l5.5-5.5L12 7" /></svg>
      <svg width="13" height="16" viewBox="0 0 13 16" fill="none" stroke="#fff" className="ml-3">
        <path d="M.5 5h8v6.5h-8zM8.5 7l3-1.8v6l-3-1.8M3 2.5q3.5-3 7 0M3 13.5q3.5 3 7 0" />
      </svg>
      <svg width="17" height="12" viewBox="0 0 17 12" fill="none" stroke="#fff" className="ml-[9px]">
        <path d="M5.5 2.5h9v8h-9zM15.5 5v3M2 0v2.5M4.5 0v2.5M.5 2.5h5v2q0 1.5-2.5 1.5T.5 4.5zM3 6v3h2" /><path d="M7.5 4h3.5v5H7.5z" fill="#fff" stroke="none" />
      </svg>
      <svg width="13" height="13" viewBox="0 0 13 13" fill="none" stroke="#ccc" className="ml-[10px]">
        <path d="M1 12.5A11.5 11.5 0 0 1 12.5 1M4 12.5A8.5 8.5 0 0 1 12.5 4M7 12.5A5.5 5.5 0 0 1 12.5 7" /><path d="M9.5 9.5h3v3h-3z" fill="#fff" stroke="none" />
      </svg>
      <svg width="17" height="14" viewBox="0 0 17 14" fill="none" stroke="#fff" className="ml-[9px]">
        <path d="M.5 5h2.5L6.5 1.5v11L3 9H.5zM8.5 5q1.5 2 0 4" /><path d="M11 3q3 4 0 8M13.5 1.5q4 5.5 0 11" stroke="#888" />
      </svg>
      <div className="ml-[7px] flex w-[60px] flex-col items-center text-[12px] leading-[18px] tracking-[-0.45px]">
        <span>15:53</span>
        <span>11/11/2025</span>
      </div>
      <svg width="17" height="17" viewBox="0 0 17 17" className="ml-[17px]">
        <path d="M0 0h16v12H7l-3 3v-3H0z" fill="#fff" />
        <path d="M3 3.5h10M3 6.5h10M3 9.5h6" stroke="#1d1c1b" /><circle cx="12.5" cy="12.5" r="4" fill="#1d1c1b" /><path d="M14.5 9.5a3.5 3.5 0 1 1-4 5c3 0 4.5-2 4-5z" fill="#fff" />
      </svg>
      <div className="mr-1 ml-[19px] h-10 w-px bg-[#5a5a5a]" />
    </div>
  )
}

export default function App() {
  return (
    <div dir="ltr" className="relative flex h-[768px] w-[1366px] flex-col overflow-hidden bg-[#f0f0f0] font-['Open_Sans','DejaVu_Sans',sans-serif]">
      <TitleBar />
      <MenuBar />
      <Ribbon />
      <FormulaBar />
      <Sheet />
      <SheetTabs />
      <StatusBar />
      <Taskbar />
      {/* recording indicator on the top edge */}
      <div className="absolute top-0 left-[563px] flex h-px w-[241px] bg-[#26382d]">
        <div className="w-12 bg-[#c8501e]" />
      </div>
      {/* watermark */}
      <div className="pointer-events-none absolute top-[676px] left-[601px] flex w-[164px] flex-col items-center text-[#a8a8a8]">
        <div dir="rtl" className="h-[52px] scale-x-[0.84] font-['DejaVu_Sans'] text-[54px] leading-[46px] font-bold opacity-30 [-webkit-text-stroke:3px_#a8a8a8]">مستقل</div>
        <div className="text-[26px] leading-[20px] font-bold tracking-[-0.2px] opacity-50">mostaql.com</div>
      </div>
    </div>
  )
}
